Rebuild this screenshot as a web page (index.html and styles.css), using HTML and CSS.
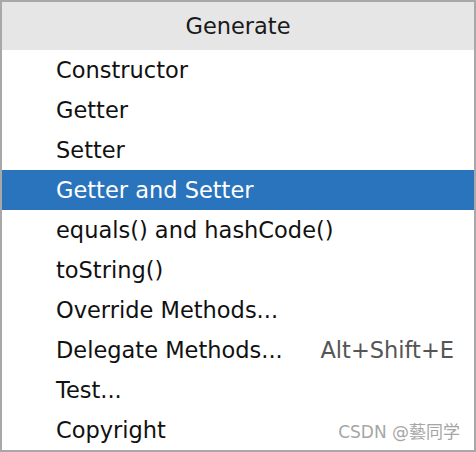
FILE: index.html
```html
<!DOCTYPE html>
<html>
<head>
<meta charset="utf-8">
<link rel="stylesheet" href="styles.css">
</head>
<body>
<div class="popup">
  <div class="header">Generate</div>
  <ul class="menu">
    <li class="item">Constructor</li>
    <li class="item">Getter</li>
    <li class="item">Setter</li>
    <li class="item selected">Getter and Setter</li>
    <li class="item">equals() and hashCode()</li>
    <li class="item">toString()</li>
    <li class="item">Override Methods...</li>
    <li class="item">Delegate Methods...<span class="shortcut">Alt+Shift+E</span></li>
    <li class="item">Test...</li>
    <li class="item">Copyright<span class="watermark">CSDN @藝同学</span></li>
  </ul>
</div>
</body>
</html>
```
FILE: styles.css
```css
html, body {
  margin: 0;
  padding: 0;
  background: #ffffff;
}
.popup {
  width: 476px;
  height: 452px;
  box-sizing: border-box;
  border: 2px solid #a8a8a8;
  background: #ffffff;
  font-family: "DejaVu Sans", "Noto Sans CJK SC", sans-serif;
  font-size: 22.5px;
  color: #111111;
  display: flex;
  flex-direction: column;
}
.header {
  height: 48px;
  background: #e6e6e6;
  display: flex;
  align-items: center;
  justify-content: center;
  color: #1a1a1a;
}
.menu {
  list-style: none;
  margin: 0;
  padding: 0;
}
.item {
  height: 40px;
  display: flex;
  align-items: center;
  justify-content: space-between;
  padding: 0 20px 0 54px;
}
.item.selected {
  background: #2a74bd;
  color: #ffffff;
}
.shortcut {
  color: #555555;
}
.watermark {
  color: #a6a6a6;
  font-size: 17px;
  align-self: flex-end;
  margin-bottom: 7px;
  margin-right: -6px;
}
```
